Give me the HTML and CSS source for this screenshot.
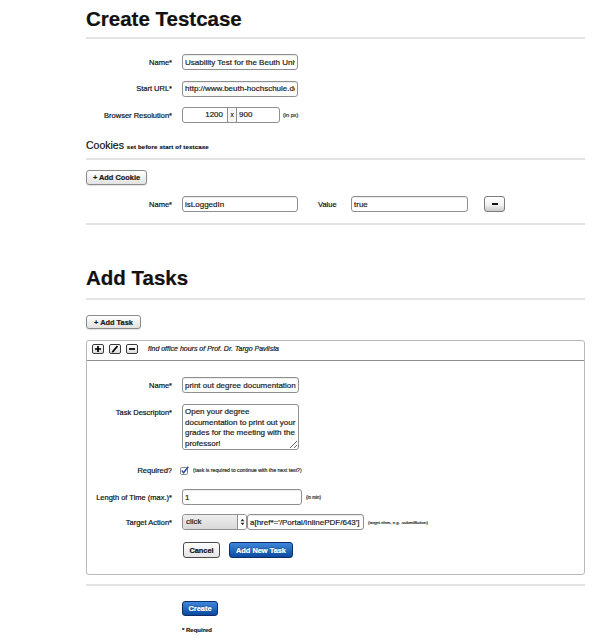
FILE: index.html
```html
<!DOCTYPE html>
<html>
<head>
<meta charset="utf-8">
<title>Create Testcase</title>
<link rel="stylesheet" href="styles.css">
</head>
<body>
<div class="page">
  <h1 class="title">Create Testcase</h1>

  <div class="row mt15">
    <label class="lbl">Name*</label>
    <input class="inp w116" type="text" value="Usability Test for the Beuth University" readonly>
  </div>
  <div class="row mt10">
    <label class="lbl">Start URL*</label>
    <input class="inp w116" type="text" value="http://www.beuth-hochschule.de" readonly>
  </div>
  <div class="row mt10">
    <label class="lbl">Browser Resolution*</label>
    <div class="res">
      <span class="res-w">1200</span><span class="res-x">x</span><span class="res-h">900</span>
    </div>
    <span class="hint hint-px">(in px)</span>
  </div>

  <div class="subhead">Cookies <span class="subnote">set before start of testcase</span></div>

  <button class="btn btn-add mt-cookie">+ Add Cookie</button>

  <div class="row mt11">
    <label class="lbl">Name*</label>
    <input class="inp w116" type="text" value="isLoggedIn" readonly>
    <label class="lbl-val">Value</label>
    <input class="inp w117" type="text" value="true" readonly>
    <button class="btn btn-minus" aria-label="remove"><span class="bar"></span></button>
  </div>

  <div class="divider mt11"></div>

  <h2 class="title2">Add Tasks</h2>

  <button class="btn btn-add mt-task">+ Add Task</button>

  <div class="task">
    <div class="task-head">
      <span class="tool"><svg width="10" height="8" viewBox="0 0 10 8"><path d="M5 1v6M2 4h6" stroke="#000" stroke-width="1.7" fill="none"/></svg></span>
      <span class="tool"><svg width="10" height="8" viewBox="0 0 10 8"><path d="M2.5 7l5-6" stroke="#000" stroke-width="1.8" fill="none"/><path d="M1.8 7.6l0.4-1.6 1.2 1z" fill="#000"/></svg></span>
      <span class="tool"><svg width="10" height="8" viewBox="0 0 10 8"><path d="M2 4h6" stroke="#000" stroke-width="1.7" fill="none"/></svg></span>
      <span class="task-title">find office hours of Prof. Dr. Targo Pavlista</span>
    </div>
    <div class="task-body">
      <div class="row">
        <label class="lbl lbl-t">Name*</label>
        <input class="inp w117" type="text" value="print out degree documentation" readonly>
      </div>
      <div class="row-top mt11">
        <label class="lbl lbl-t lbl-top">Task Descripton*</label>
        <textarea class="area" readonly>Open your degree
documentation to print out your
grades for the meeting with the
professor!</textarea>
      </div>
      <div class="row row-sm mt14">
        <label class="lbl lbl-t">Required?</label>
        <svg class="check" width="9" height="9" viewBox="0 0 9 9"><rect x="0.5" y="1.5" width="7" height="7" rx="1.2" fill="#fff" stroke="#8a8a8a"/><path d="M1.8 4.6l1.8 2.2L8.3 0.8" stroke="#2b4fa3" stroke-width="1.5" fill="none"/></svg>
        <span class="hint hint-req">(task is required to continue with the next test?)</span>
      </div>
      <div class="row mt13">
        <label class="lbl lbl-t">Length of Time (max.)*</label>
        <input class="inp w120" type="text" value="1" readonly>
        <span class="hint hint-min">(in min)</span>
      </div>
      <div class="row mt9">
        <label class="lbl lbl-t">Target Action*</label>
        <div class="select">
          <span class="select-val">click</span>
          <span class="select-arr"><svg width="5" height="8" viewBox="0 0 5 8"><path d="M0.5 3.2L2.5 0.8 4.5 3.2zM0.5 4.8L2.5 7.2 4.5 4.8z" fill="#333"/></svg></span>
        </div>
        <input class="inp w117 ml3" type="text" value="a[href*='/Portal/InlinePDF/643']" readonly>
        <span class="hint hint-tgt">(target elem, e.g. .submitButton)</span>
      </div>
      <div class="actions mt12">
        <button class="btn btn-cancel">Cancel</button>
        <button class="btn btn-primary">Add New Task</button>
      </div>
    </div>
  </div>

  <div class="divider mt9"></div>

  <div class="submit">
    <button class="btn btn-primary">Create</button>
    <div class="req-note">* Required</div>
  </div>
</div>
</body>
</html>
```

FILE: styles.css
```css
body {
  margin: 0;
  background: #fff;
  color: #1c1c1c;
  font-family: "Liberation Sans", Arial, sans-serif;
}

.page {
  margin-left: 86px;
  width: 499px;
  -webkit-text-stroke: 0.2px currentColor;
}

.title {
  margin: 0;
  padding: 7px 0 6px;
  font-size: 20.5px;
  line-height: 24px;
  font-weight: bold;
  color: #111;
  border-bottom: 2px solid #e3e3e3;
}

.title2 {
  margin: 41px 0 0;
  padding: 0 0 8px;
  font-size: 20.5px;
  line-height: 24px;
  font-weight: bold;
  color: #111;
  border-bottom: 2px solid #e3e3e3;
}

.mt15 { margin-top: 15px; }
.mt10 { margin-top: 10.5px; }
.mt11 { margin-top: 11px; }
.mt12 { margin-top: 12px; }
.mt13 { margin-top: 13px; }
.mt14 { margin-top: 14px; }
.mt9 { margin-top: 9px; }
.ml3 { margin-left: 3px; }

.row {
  display: flex;
  align-items: center;
  height: 16px;
}

.row-sm { height: 12px; }

.row-top {
  display: flex;
  align-items: flex-start;
}

.lbl {
  flex: none;
  width: 86px;
  margin-right: 10px;
  text-align: right;
  font-size: 7.5px;
  color: #111;
  white-space: nowrap;
}

.lbl-t { width: 85px; }
.lbl-top { padding-top: 4px; }

.lbl-val {
  flex: none;
  width: 33px;
  margin-left: 20px;
  font-size: 7.5px;
  color: #111;
}

.inp {
  box-sizing: border-box;
  height: 16px;
  margin: 0;
  padding: 0 2px;
  border: 1px solid #8f8f8f;
  border-radius: 3px;
  background: #fff;
  color: #1c1c1c;
  font-family: "Liberation Sans", Arial, sans-serif;
  font-size: 8px;
  outline: none;
  -webkit-text-stroke: 0.2px #1c1c1c;
  box-shadow: inset 0 1px 1px rgba(0,0,0,0.08);
}

.w116 { width: 116px; }
.w117 { width: 117px; }
.w120 { width: 120px; }

.res {
  display: flex;
  box-sizing: border-box;
  width: 98px;
  height: 16px;
  border: 1px solid #8f8f8f;
  border-radius: 3px;
  font-size: 8px;
  line-height: 14px;
  overflow: hidden;
}

.res-w {
  width: 44px;
  padding-right: 4px;
  box-sizing: border-box;
  text-align: right;
}

.res-x {
  width: 8px;
  text-align: center;
  font-size: 6.5px;
  border-left: 1px solid #8f8f8f;
  border-right: 1px solid #8f8f8f;
  background: #f6f6f6;
}

.res-h {
  padding-left: 2px;
}

.hint {
  font-size: 5px;
  color: #333;
  white-space: nowrap;
}

.hint-px { margin-left: 3px; font-size: 5.5px; }
.hint-min { margin-left: 4px; font-size: 4.5px; }
.hint-req { margin-left: 4px; font-size: 5.2px; }
.hint-tgt { margin-left: 4px; font-size: 4.2px; }

.subhead {
  margin-top: 16px;
  padding-bottom: 4px;
  font-size: 10.5px;
  line-height: 13px;
  color: #111;
  border-bottom: 2px solid #e3e3e3;
}

.subnote {
  font-size: 6px;
  font-weight: bold;
  letter-spacing: 0.2px;
}

.btn {
  display: inline-flex;
  align-items: center;
  justify-content: center;
  box-sizing: border-box;
  margin: 0;
  padding: 0 6px;
  border-radius: 3px;
  font-family: "Liberation Sans", Arial, sans-serif;
  font-weight: bold;
  font-size: 7.4px;
  white-space: nowrap;
  cursor: pointer;
}

.btn-add {
  height: 15px;
  border: 1px solid #8a8a8a;
  background: linear-gradient(#ffffff, #e2e2e2);
  color: #1a1a1a;
  box-shadow: 0 1px 1px rgba(0,0,0,0.12);
}

.mt-cookie { margin-top: 10px; width: 61px; padding: 0; }
.mt-task { margin-top: 15px; height: 14px; width: 55px; padding: 0; }

.btn-minus {
  width: 21px;
  height: 16px;
  margin-left: 16px;
  padding: 0;
  border: 1px solid #7c7c7c;
  background: linear-gradient(#ffffff 0%, #f3f3f3 55%, #c9c9c9 100%);
}

.bar {
  display: block;
  width: 6px;
  height: 2px;
  background: #111;
}

.divider {
  border-top: 2px solid #e3e3e3;
}

.task {
  margin-top: 11px;
  border: 1px solid #b9b9b9;
  border-radius: 3px;
}

.task-head {
  display: flex;
  align-items: flex-start;
  height: 20px;
  padding: 3px 0 0 5px;
  box-sizing: border-box;
  border-bottom: 1px solid #8e8e8e;
}

.tool {
  display: flex;
  align-items: center;
  justify-content: center;
  box-sizing: border-box;
  width: 12px;
  height: 10px;
  margin-right: 5px;
  border: 1px solid #3a3a3a;
  border-radius: 2px;
  background: linear-gradient(#ffffff, #dcdcdc);
}

.task-title {
  margin-left: 5px;
  font-size: 7px;
  font-style: italic;
  line-height: 10px;
  color: #1a1a1a;
}

.task-body {
  padding: 16px 0 16px;
}

.area {
  box-sizing: border-box;
  width: 117px;
  height: 46px;
  margin: 0;
  padding: 2px 2px;
  border: 1px solid #8f8f8f;
  border-radius: 3px;
  font-family: "Liberation Sans", Arial, sans-serif;
  font-size: 8px;
  line-height: 10.5px;
  color: #1c1c1c;
  -webkit-text-stroke: 0.2px #1c1c1c;
  white-space: pre;
  overflow: hidden;
  outline: none;
}

.check { flex: none; margin-left: -2px; }

.select {
  display: flex;
  box-sizing: border-box;
  width: 65px;
  height: 16px;
  border: 1px solid #8f8f8f;
  border-radius: 3px;
  overflow: hidden;
}

.select-val {
  flex: 1;
  padding-left: 3px;
  font-size: 8px;
  line-height: 14px;
  background: linear-gradient(#eeeeee, #d9d9d9);
}

.select-arr {
  display: flex;
  align-items: center;
  justify-content: center;
  width: 8px;
  border-left: 1px solid #8f8f8f;
  background: #fff;
}

.actions {
  display: flex;
  padding-left: 96px;
  gap: 9px;
}

.btn-cancel {
  height: 16px;
  width: 37px;
  border: 1px solid #4a4a4a;
  background: linear-gradient(#ffffff, #e4e4e4);
  color: #111;
}

.btn-primary {
  height: 16px;
  border: 1px solid #0a2f6a;
  background: linear-gradient(#3f86da, #0b4aa0);
  color: #fff;
  text-shadow: 0 -1px 0 rgba(0,0,0,0.25);
}

.submit {
  padding-left: 96px;
  padding-top: 11px;
}

.submit .btn-primary {
  height: 15px;
  width: 36px;
  padding: 0;
}

.req-note {
  margin-top: 9px;
  font-size: 6px;
  font-weight: bold;
  line-height: 10px;
}
```
